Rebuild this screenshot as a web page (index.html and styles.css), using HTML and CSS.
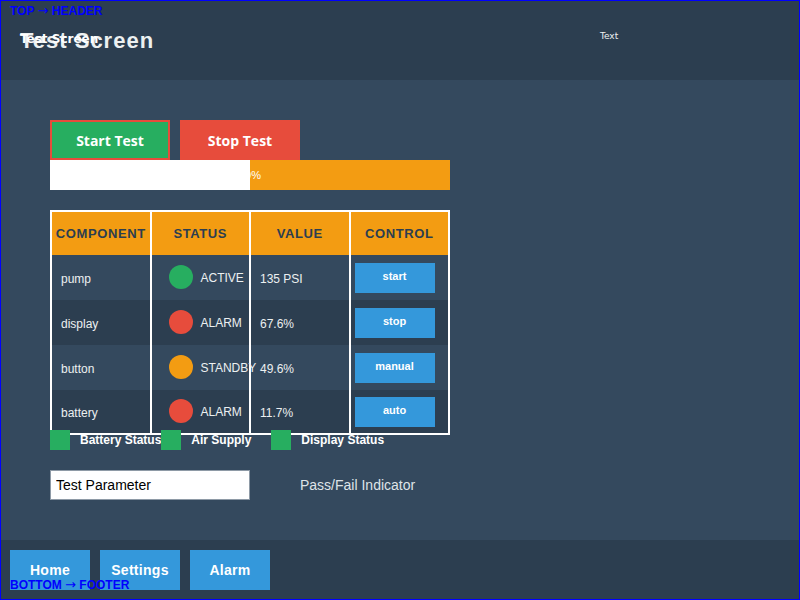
FILE: index.html
```html
<!DOCTYPE html>
<html>
<head>
<meta charset="utf-8">
<link rel="stylesheet" href="styles.css">
</head>
<body>
<div class="page">
  <div class="tag tag-top">TOP <span class="arrow">→</span> HEADER</div>
  <header class="header">
    <h1 class="title">Test Screen</h1>
    <div class="title-small">Test Screen</div>
    <div class="header-text">Text</div>
  </header>
  <main class="main">
    <div class="actions">
      <button class="btn btn-start">Start Test</button>
      <button class="btn btn-stop">Stop Test</button>
    </div>
    <div class="progress">
      <div class="progress-fill" style="width:50%"></div>
      <span class="progress-label">50%</span>
    </div>
    <table class="grid">
      <thead>
        <tr><th>COMPONENT</th><th>STATUS</th><th>VALUE</th><th>CONTROL</th></tr>
      </thead>
      <tbody>
        <tr>
          <td>pump</td>
          <td><span class="dot dot-green"></span>ACTIVE</td>
          <td>135 PSI</td>
          <td><button class="ctl">start</button></td>
        </tr>
        <tr>
          <td>display</td>
          <td><span class="dot dot-red"></span>ALARM</td>
          <td>67.6%</td>
          <td><button class="ctl">stop</button></td>
        </tr>
        <tr>
          <td>button</td>
          <td><span class="dot dot-orange"></span>STANDBY</td>
          <td>49.6%</td>
          <td><button class="ctl">manual</button></td>
        </tr>
        <tr>
          <td>battery</td>
          <td><span class="dot dot-red"></span>ALARM</td>
          <td>11.7%</td>
          <td><button class="ctl">auto</button></td>
        </tr>
      </tbody>
    </table>
    <div class="legend">
      <div class="legend-item"><span class="swatch"></span><span class="legend-label">Battery Status</span></div>
      <div class="legend-item"><span class="swatch"></span><span class="legend-label">Air Supply</span></div>
      <div class="legend-item"><span class="swatch"></span><span class="legend-label">Display Status</span></div>
    </div>
    <div class="form-row">
      <input class="param" type="text" value="Test Parameter">
      <span class="passfail">Pass/Fail Indicator</span>
    </div>
  </main>
  <footer class="footer">
    <button class="nav">Home</button>
    <button class="nav">Settings</button>
    <button class="nav">Alarm</button>
  </footer>
  <div class="tag tag-bottom">BOTTOM <span class="arrow">→</span> FOOTER</div>
</div>
</body>
</html>
```

FILE: styles.css
```css
* { box-sizing: border-box; }
html, body { margin: 0; padding: 0; }
body { width: 800px; height: 600px; overflow: hidden; background: #34495e; }

.page {
  position: relative;
  width: 800px;
  height: 600px;
  display: flex;
  flex-direction: column;
  font-family: "Liberation Sans", Arial, sans-serif;
}
.page::after {
  content: "";
  position: absolute;
  inset: 0;
  border: 1px solid #0000ff;
  pointer-events: none;
}

.tag {
  position: absolute;
  left: 10px;
  z-index: 5;
  color: #0000ff;
  font-family: "Liberation Sans", Arial, sans-serif;
  font-weight: bold;
  font-size: 12px;
  line-height: 14px;
}
.arrow { font-family: "DejaVu Sans", sans-serif; font-weight: normal; font-size: 13px; }
.tag-top { top: 4px; }
.tag-bottom { top: 578px; }

.header {
  position: relative;
  height: 80px;
  flex: 0 0 80px;
  background: #2c3e50;
  padding: 28px 0 0 20px;
}
.title {
  margin: 0;
  font-family: "Liberation Sans", Arial, sans-serif;
  font-weight: bold;
  font-size: 22px;
  line-height: 26px;
  letter-spacing: 1px;
  color: #ecf0f1;
}
.title-small {
  position: absolute;
  left: 20px;
  top: 32px;
  font-family: "DejaVu Sans", sans-serif;
  font-weight: bold;
  font-size: 12px;
  line-height: 14px;
  color: #ffffff;
}
.header-text {
  position: absolute;
  left: 600px;
  top: 31px;
  font-family: "DejaVu Sans", sans-serif;
  font-size: 9px;
  line-height: 11px;
  color: #ecf0f1;
}

.main {
  flex: 1 1 auto;
  background: #34495e;
  padding: 40px 50px 0 50px;
}

.actions {
  display: flex;
  gap: 10px;
  height: 40px;
}
.btn {
  width: 120px;
  height: 40px;
  border: none;
  margin: 0;
  padding: 0;
  color: #ffffff;
  font-family: "Open Sans", sans-serif;
  font-weight: bold;
  font-size: 14px;
}
.btn-start { background: #27ae60; border: 2px solid #e74c3c; }
.btn-stop { background: #e74c3c; }

.progress {
  position: relative;
  width: 400px;
  height: 30px;
  background: #f39c12;
}
.progress-fill {
  height: 30px;
  background: #ffffff;
}
.progress-label {
  position: absolute;
  left: 0;
  right: 0;
  top: 8px;
  text-align: center;
  color: #ffffff;
  font-size: 11px;
  line-height: 14px;
}

.grid {
  margin-top: 20px;
  width: 400px;
  border-collapse: collapse;
  border: 2px solid #ffffff;
  table-layout: fixed;
  color: #ecf0f1;
  font-size: 12px;
}
.grid th, .grid td {
  border-left: 2px solid #ffffff;
  border-right: 2px solid #ffffff;
  height: 45px;
  padding: 0 0 0 9px;
  white-space: nowrap;
  overflow: visible;
}
.grid th {
  height: 44px;
  background: #f39c12;
  color: #2c3e50;
  font-size: 13px;
  font-weight: bold;
  letter-spacing: 0.6px;
  text-align: center;
  padding: 0;
}
.grid tbody tr:last-child td { height: 44px; }
.grid tbody tr:nth-child(odd) td { background: #34495e; }
.grid tbody tr:nth-child(even) td { background: #2c3e50; }
.grid td { text-align: left; vertical-align: middle; padding-top: 2px; }

.dot {
  display: inline-block;
  width: 24px;
  height: 24px;
  border-radius: 50%;
  margin: 0 8px 0 8px;
  vertical-align: middle;
  position: relative;
  top: -2px;
}
.dot-green { background: #27ae60; }
.dot-red { background: #e74c3c; }
.dot-orange { background: #f39c12; }

.grid td:last-child { padding: 0 0 0 4px; }
.ctl {
  display: block;
  width: 80px;
  height: 30px;
  margin: 0;
  border: none;
  background: #3498db;
  color: #ffffff;
  font-family: "Liberation Sans", Arial, sans-serif;
  font-weight: bold;
  font-size: 11px;
  padding: 0 0 4px 0;
}

.legend {
  display: flex;
  margin-top: -5px;
  height: 20px;
  position: relative;
}
.legend-item {
  flex: 0 0 110px;
  display: flex;
  align-items: center;
  white-space: nowrap;
}
.swatch {
  flex: 0 0 20px;
  width: 20px;
  height: 20px;
  background: #27ae60;
  margin-right: 10px;
}
.legend-label {
  color: #ffffff;
  font-weight: bold;
  font-size: 12px;
  position: relative;
  z-index: 1;
}
.legend-item + .legend-item .swatch { position: relative; z-index: 2; }

.form-row {
  margin-top: 20px;
  display: flex;
  align-items: center;
  gap: 50px;
}
.param {
  width: 200px;
  height: 30px;
  margin: 0;
  border: 1px solid #8e9aa6;
  background: #ffffff;
  padding: 0 5px;
  font-family: "Liberation Sans", Arial, sans-serif;
  font-size: 14px;
  color: #000000;
  outline: none;
}
.passfail {
  color: #dfe4e8;
  font-size: 14px;
}

.footer {
  flex: 0 0 60px;
  height: 60px;
  background: #2c3e50;
  padding: 10px;
  display: flex;
  gap: 10px;
}
.nav {
  width: 80px;
  height: 40px;
  margin: 0;
  border: none;
  background: #3498db;
  color: #ffffff;
  font-family: "Liberation Sans", Arial, sans-serif;
  font-weight: bold;
  font-size: 14px;
  letter-spacing: 0.3px;
  padding: 0;
}
```
